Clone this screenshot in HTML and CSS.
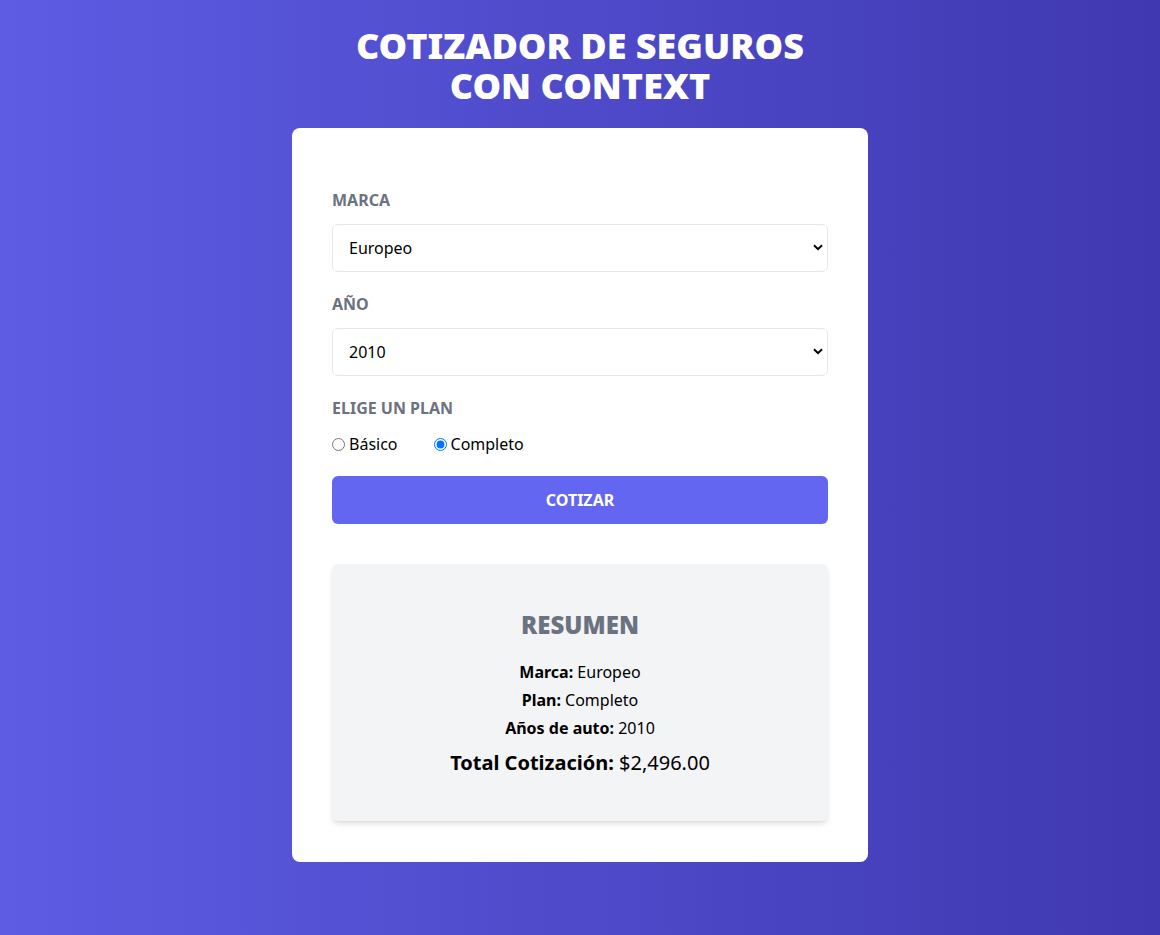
FILE: index.html
```html
<!DOCTYPE html>
<html lang="es">
<head>
<meta charset="utf-8">
<title>Cotizador de Seguros</title>
<link rel="stylesheet" href="styles.css">
</head>
<body>
<header class="header">
  <h1 class="title"><span class="title-line">Cotizador de seguros</span><span class="title-line">con Context</span></h1>
</header>
<main class="card">
  <form class="form">
    <div class="field">
      <label class="label" for="marca">Marca</label>
      <div class="select-wrap">
        <select id="marca" class="select">
          <option>Europeo</option>
          <option>Americano</option>
          <option>Asiático</option>
        </select>
        <svg class="chev" width="10" height="7" viewBox="0 0 10 7"><path d="M1 1.2 L5 5.2 L9 1.2" fill="none" stroke="#000" stroke-width="2"/></svg>
      </div>
    </div>
    <div class="field">
      <label class="label" for="year">Año</label>
      <div class="select-wrap">
        <select id="year" class="select">
          <option>2010</option>
        </select>
        <svg class="chev" width="10" height="7" viewBox="0 0 10 7"><path d="M1 1.2 L5 5.2 L9 1.2" fill="none" stroke="#000" stroke-width="2"/></svg>
      </div>
    </div>
    <div class="field">
      <span class="label">Elige un plan</span>
      <div class="radios">
        <label class="radio"><input type="radio" name="plan" value="1"> Básico</label>
        <label class="radio"><input type="radio" name="plan" value="2" checked> Completo</label>
      </div>
    </div>
    <button type="button" class="btn">Cotizar</button>
  </form>
  <section class="summary">
    <h2 class="summary-title">Resumen</h2>
    <p class="line"><b>Marca:</b> Europeo</p>
    <p class="line"><b>Plan:</b> Completo</p>
    <p class="line"><b>Años de auto:</b> 2010</p>
    <p class="total"><b>Total Cotización:</b> $2,496.00</p>
  </section>
</main>
</body>
</html>
```

FILE: styles.css
```css
* { box-sizing: border-box; }
html, body { margin: 0; }
body {
  min-height: 935px;
  background: linear-gradient(to right, #5d5ce3, #3f38b0);
  font-family: "Noto Sans", "Open Sans", sans-serif;
  color: #000;
  padding-top: 26px;
}
.header { text-align: center; }
.title {
  margin: 0;
  color: #fff;
  font-family: "Noto Sans", sans-serif;
  font-weight: 900;
  font-size: 36px;
  line-height: 40px;
  text-transform: uppercase;
}
.title-line { display: block; height: 40px; }
.card {
  width: 576px;
  margin: 22px auto 0;
  background: #fff;
  border-radius: 8px;
  padding: 20px 40px 41px;
}
.form { padding-top: 20px; }
.field { margin-top: 20px; }
.label {
  display: block;
  font-weight: 700;
  font-size: 16px;
  line-height: 24px;
  color: #6b7280;
  text-transform: uppercase;
  margin-bottom: 12px;
}
.select-wrap { position: relative; }
.select {
  display: block;
  width: 100%;
  height: 48px;
  appearance: none;
  -webkit-appearance: none;
  background: #fff;
  border: 1px solid #e5e7eb;
  border-radius: 6px;
  padding: 0 16px;
  font-family: inherit;
  font-size: 16px;
  color: #000;
}
.chev {
  position: absolute;
  right: 5px;
  top: 20px;
  pointer-events: none;
}
.radios { display: flex; align-items: center; height: 24px; }
.radio {
  display: flex;
  align-items: center;
  font-size: 16px;
  margin-right: 36px;
}
.radio input { margin: 0 4px 0 0; width: 13px; height: 13px; }
.btn {
  display: block;
  width: 100%;
  height: 48px;
  margin-top: 20px;
  border: 0;
  border-radius: 6px;
  background: #6366f1;
  color: #fff;
  font-family: inherit;
  font-weight: 700;
  font-size: 16px;
  text-transform: uppercase;
}
.summary {
  margin-top: 40px;
  background: #f3f4f6;
  border-radius: 6px;
  box-shadow: 0 4px 6px -1px rgba(0,0,0,.1), 0 2px 4px -2px rgba(0,0,0,.1);
  padding: 45px 20px 44px;
  text-align: center;
}
.summary-title {
  margin: 0 0 17px;
  font-size: 24px;
  line-height: 32px;
  font-weight: 900;
  color: #6b7280;
  text-transform: uppercase;
}
.line { margin: 0; font-size: 16px; line-height: 28px; }
.total { margin: 7px 0 0; font-size: 20px; line-height: 28px; }
```
